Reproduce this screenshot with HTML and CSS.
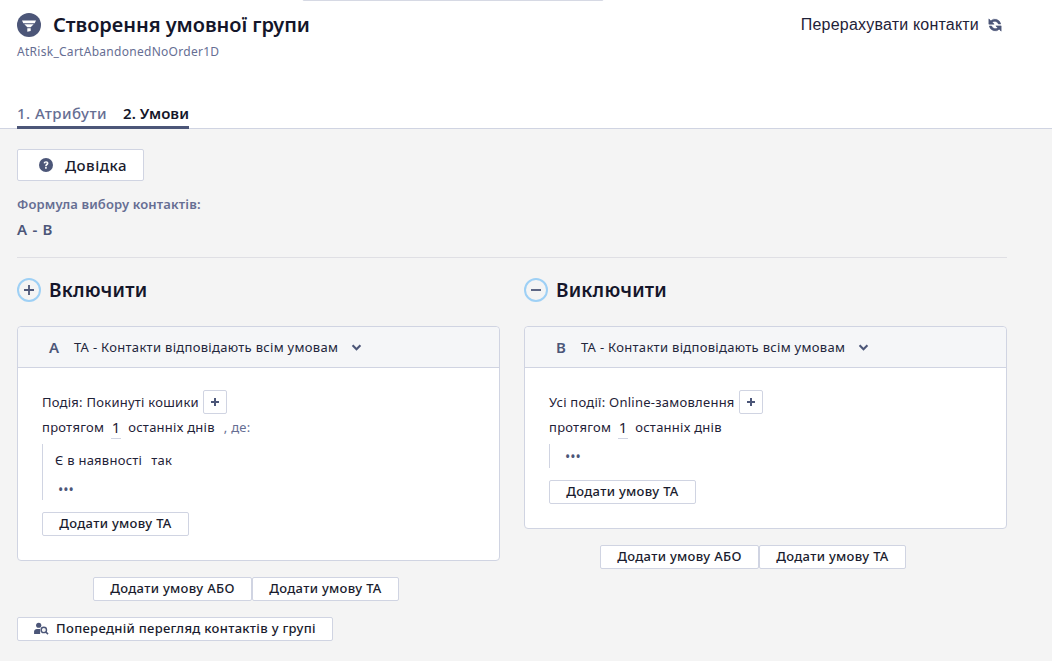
FILE: index.html
```html
<!DOCTYPE html>
<html lang="uk">
<head>
<meta charset="utf-8">
<title>Створення умовної групи</title>
<link rel="stylesheet" href="styles.css">
</head>
<body>
<div class="top-sliver"></div>
<header class="header">
  <div class="title-row">
    <div class="title-left">
      <span class="title-icon"><svg viewBox="0 0 24 24" width="24" height="24"><circle cx="12" cy="12" r="12" fill="#4c5678"/><path d="M5 7.500h14l-1.300 2.700H6.300zM7.300 11.200h9.400l-3 3.100h-3.400zM10.300 15.300h3.400v2.700l-3.400.8z" fill="#fff"/></svg></span>
      <h1 class="title">Створення умовної групи</h1>
    </div>
    <div class="recount">
      <span>Перерахувати контакти</span>
      <svg viewBox="0 0 16 16" width="14" height="14"><path d="M14.500 6.800A6.800 6.800 0 0 0 3.200 3.200L1 1v6h6L4.900 4.900a4.300 4.300 0 0 1 7 1.900zM1.500 9.200a6.800 6.800 0 0 0 11.300 3.600L15 15V9H9l2.100 2.100a4.300 4.300 0 0 1-7-1.900z" fill="#4c5678" stroke="#4c5678" stroke-width="0.700"/></svg>
    </div>
  </div>
  <div class="subtitle">AtRisk_CartAbandonedNoOrder1D</div>
  <nav class="tabs">
    <span class="tab">1. Атрибути</span>
    <span class="tab tab-active">2. Умови</span>
  </nav>
</header>
<main class="content">
  <button class="btn btn-help"><svg viewBox="0 0 16 16" width="14" height="14"><circle cx="8" cy="8" r="8" fill="#4c5678"/><path d="M5.300 6.100c0-1.600 1.200-2.500 2.800-2.500s2.700.9 2.700 2.300c0 2-2 1.900-2 3.400H7c0-2.300 1.800-2.300 1.800-3.300 0-.5-.3-.8-.8-.8s-.9.300-1 1zM7 10.400h1.800v1.900H7z" fill="#fff"/></svg><span>Довідка</span></button>
  <div class="formula-label">Формула вибору контактів:</div>
  <div class="formula">A - B</div>
  <hr class="rule">
  <div class="columns">
    <section class="col">
      <div class="col-head">
        <span class="round"><svg viewBox="0 0 12 12" width="12" height="12"><path d="M1 6h10M6 1v10" stroke="#4c5678" stroke-width="1.800"/></svg></span>
        <h2 class="col-title">Включити</h2>
      </div>
      <div class="card">
        <div class="card-head">
          <span class="letter">A</span>
          <span class="card-cond">ТА - Контакти відповідають всім умовам</span>
          <svg class="chev" viewBox="0 0 12 8" width="11" height="7"><path d="M1.500 1.500 6 6l4.500-4.500" fill="none" stroke="#4c5678" stroke-width="2.400"/></svg>
        </div>
        <div class="card-body">
          <div class="line">
            <span>Подія: Покинуті кошики</span>
            <span class="plus"><svg viewBox="0 0 10 10" width="10" height="10"><path d="M1 5h8M5 1v8" stroke="#4c5678" stroke-width="2"/></svg></span>
          </div>
          <div class="line2">
            <span>протягом</span><span class="num">1</span><span>останніх днів</span><span class="muted">, де:</span>
          </div>
          <div class="nested">
            <div class="nested-text"><span>Є в наявності</span><span>так</span></div>
            <div class="dots">•••</div>
          </div>
          <button class="btn btn-small btn-and">Додати умову ТА</button>
        </div>
      </div>
      <div class="group-actions">
        <button class="btn btn-small btn-or">Додати умову АБО</button><button class="btn btn-small btn-and">Додати умову ТА</button>
      </div>
      <button class="btn btn-small btn-preview"><svg viewBox="0 0 16 14" width="15" height="13"><circle cx="5" cy="3.500" r="2.800" fill="#4c5678"/><path d="M0 13v-2.500C0 8.500 1.500 7.500 3 7.500h3.500V13z" fill="#4c5678"/><circle cx="10.500" cy="8.500" r="2.900" fill="#f4f4f4" stroke="#4c5678" stroke-width="1.500"/><path d="m12.500 10.500 2.500 2.500" stroke="#4c5678" stroke-width="1.700"/></svg><span>Попередній перегляд контактів у групі</span></button>
    </section>
    <section class="col">
      <div class="col-head">
        <span class="round"><svg viewBox="0 0 12 12" width="12" height="12"><path d="M1 6h10" stroke="#4c5678" stroke-width="1.800"/></svg></span>
        <h2 class="col-title">Виключити</h2>
      </div>
      <div class="card">
        <div class="card-head">
          <span class="letter">B</span>
          <span class="card-cond">ТА - Контакти відповідають всім умовам</span>
          <svg class="chev" viewBox="0 0 12 8" width="11" height="7"><path d="M1.500 1.500 6 6l4.500-4.500" fill="none" stroke="#4c5678" stroke-width="2.400"/></svg>
        </div>
        <div class="card-body">
          <div class="line">
            <span>Усі події: Online-замовлення</span>
            <span class="plus"><svg viewBox="0 0 10 10" width="10" height="10"><path d="M1 5h8M5 1v8" stroke="#4c5678" stroke-width="2"/></svg></span>
          </div>
          <div class="line2">
            <span>протягом</span><span class="num">1</span><span>останніх днів</span>
          </div>
          <div class="nested nested-short">
            <div class="dots">•••</div>
          </div>
          <button class="btn btn-small btn-and">Додати умову ТА</button>
        </div>
      </div>
      <div class="group-actions">
        <button class="btn btn-small btn-or">Додати умову АБО</button><button class="btn btn-small btn-and">Додати умову ТА</button>
      </div>
    </section>
  </div>
</main>
</body>
</html>
```
FILE: styles.css
```css
* { box-sizing: border-box; }
html, body { margin: 0; height: 100%; }
body {
  width: 1052px;
  height: 661px;
  overflow: hidden;
  position: relative;
  background: #f4f4f4;
  font-family: "Noto Sans", "Liberation Sans", sans-serif;
  color: #1a1c2e;
}
.top-sliver {
  position: absolute;
  left: 302px;
  top: -4px;
  width: 302px;
  height: 5px;
  background: #fff;
  border: 1px solid #d6d9e4;
  border-radius: 2px;
}
.header {
  height: 129px;
  background: #fff;
  border-bottom: 1px solid #d0d4e2;
  padding: 13px 17px 0;
  display: flex;
  flex-direction: column;
}
.title-row { display: flex; justify-content: space-between; align-items: center; height: 24px; }
.title-left { display: flex; align-items: center; gap: 12px; }
.title-icon { width: 24px; height: 24px; display: block; }
.title-icon svg { display: block; }
.title { margin: 0; font-size: 20px; line-height: 24px; font-weight: 600; letter-spacing: -0.05px; color: #14162a; }
.recount { display: flex; align-items: center; gap: 9px; font-family: "Liberation Sans", sans-serif; font-size: 16px; letter-spacing: 0.2px; color: #1f2238; padding-right: 33px; }
.subtitle { margin-top: 7px; font-size: 12px; line-height: 15px; letter-spacing: 0.28px; color: #666e93; }
.tabs { margin-top: auto; display: flex; margin-bottom: -1px; }
.tab {
  font-size: 15px;
  font-weight: 500;
  letter-spacing: 0.45px;
  line-height: 20px;
  padding: 1px 16px 3px 0;
  color: #666e93;
  border-bottom: 3px solid #4c5678;
}
.tab-active { color: #14162a; font-weight: 600; letter-spacing: 0; padding-right: 0; }
.content { padding: 20px 45px 0 17px; }
.btn {
  display: inline-flex;
  align-items: center;
  justify-content: center;
  background: #fff;
  border: 1px solid #d0d4e2;
  border-radius: 2px;
  font-family: inherit;
  color: #1a1c2e;
  padding: 0;
}
.btn-help { width: 127px; height: 32px; gap: 12px; padding-left: 5px; font-size: 15px; font-weight: 500; letter-spacing: 0.5px; }
.formula-label { margin-top: 14px; font-size: 13px; line-height: 18px; font-weight: 600; letter-spacing: 0.15px; color: #666e93; }
.formula { margin-top: 7px; font-size: 15px; line-height: 18px; font-weight: 600; letter-spacing: 0.7px; color: #4c5678; }
.rule { margin: 19px 0 0; border: 0; border-top: 1px solid #dfdfe4; }
.columns { display: grid; grid-template-columns: 483px 483px; column-gap: 24px; margin-top: 20px; }
.col-head { display: flex; align-items: center; gap: 8px; height: 24px; }
.round {
  width: 24px;
  height: 24px;
  border-radius: 50%;
  border: 2px solid #9ed0f5;
  display: flex;
  align-items: center;
  justify-content: center;
}
.round svg { display: block; }
.col-title { margin: 0; font-size: 19px; line-height: 24px; font-weight: 600; letter-spacing: 0.2px; color: #14162a; }
.card { margin-top: 24px; background: #fff; border: 1px solid #d0d4e2; border-radius: 4px; }
.card-head {
  height: 41px;
  background: #f5f6f8;
  border-bottom: 1px solid #d0d4e2;
  border-radius: 4px 4px 0 0;
  display: flex;
  align-items: center;
  padding-left: 31px;
}
.letter { width: 25px; font-size: 15px; font-weight: 600; color: #4c5678; }
.card-cond { font-size: 13px; letter-spacing: 0.3px; color: #23263c; }
.chev { margin-left: 13px; }
.card-body { padding: 22px 24px 24px; font-size: 13px; letter-spacing: 0.25px; color: #1f2238; }
.line { display: flex; align-items: center; gap: 4px; height: 24px; }
.plus {
  width: 24px;
  height: 24px;
  background: #fff;
  border: 1px solid #d0d4e2;
  border-radius: 2px;
  display: flex;
  align-items: center;
  justify-content: center;
}
.line2 { display: flex; align-items: center; height: 24px; margin-top: 1px; }
.num { margin: 0 7px; min-width: 10px; text-align: center; font-size: 15px; line-height: 22px; border-bottom: 1px solid #d0d4e2; }
.muted { margin-left: 9px; color: #666e93; }
.nested { margin-top: 5px; border-left: 1px solid #d0d4e2; padding-left: 12px; height: 56px; }
.nested-short { height: 24px; }
.nested-text { display: flex; gap: 9px; height: 25px; margin-top: 4px; align-items: center; padding-top: 6px; }
.dots { font-size: 14px; line-height: 24px; letter-spacing: 0; color: #4c5678; margin-top: 9px; padding-left: 3px; }
.nested-short .dots { margin-top: 0; padding-top: 1px; }
.btn-small { height: 24px; padding-bottom: 2px; font-size: 13px; font-weight: 500; letter-spacing: 0.3px; }
.btn-and { width: 147px; }
.card-body > .btn { margin-top: 12px; }
.btn-or { width: 159px; }
.group-actions { margin-top: 16px; display: flex; justify-content: center; padding-right: 25px; }
.btn-preview { margin-top: 16px; width: 316px; gap: 7px; }
```
